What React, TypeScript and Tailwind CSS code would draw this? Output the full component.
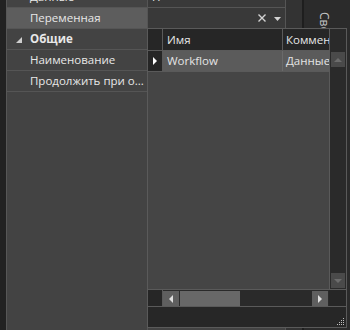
import React from "react";

const font = { fontFamily: '"Open Sans", "Noto Sans", sans-serif' };

function Tri({ dir, color }: { dir: "l" | "r" | "u" | "d"; color: string }) {
  const pts =
    dir === "l"
      ? "4,0 4,8 0,4"
      : dir === "r"
      ? "0,0 0,8 4,4"
      : dir === "u"
      ? "0,4 8,4 4,0"
      : "0,0 8,0 4,4";
  const w = dir === "l" || dir === "r" ? 4 : 8;
  const h = dir === "l" || dir === "r" ? 8 : 4;
  return (
    <svg width={w} height={h} viewBox={`0 0 ${w} ${h}`}>
      <polygon points={pts} fill={color} />
    </svg>
  );
}

function PropRow({
  label,
  highlight,
  value,
}: {
  label: string;
  highlight?: boolean;
  value?: React.ReactNode;
}) {
  return (
    <div className="flex h-[21px] border-b border-[#555555] shrink-0">
      <div
        className={`w-[140px] shrink-0 pl-[23px] flex items-center text-[#e8e8e8] whitespace-nowrap overflow-hidden ${
          highlight ? "bg-[#5d5d5d]" : ""
        }`}
      >
        {label}
      </div>
      <div className="w-px bg-[#555555] shrink-0" />
      <div className="flex-1 bg-[#393939] flex items-center">{value}</div>
    </div>
  );
}

export default function App() {
  return (
    <div
      className="w-[350px] h-[330px] relative overflow-hidden flex bg-[#434343] text-[11.5px] leading-none"
      style={font}
    >
      <div className="w-[6px] bg-[#222222] shrink-0" />
      <div className="w-px bg-[#575757] shrink-0" />

      {/* property grid */}
      <div className="w-[278px] shrink-0 flex flex-col">
        <div className="mt-[-13px]" />
        <PropRow
          label="Данные"
          value={<span className="pl-[4px] text-[#e8e8e8]">Н</span>}
        />
        <PropRow
          label="Переменная"
          highlight
          value={
            <div className="flex-1 flex items-center justify-end pr-[4px]">
              <svg width="8" height="8" viewBox="0 0 8 8">
                <path d="M0.5 0.5 L7.5 7.5 M7.5 0.5 L0.5 7.5" stroke="#d4d4d4" strokeWidth="1.4" />
              </svg>
              <span className="mt-[2px] ml-[8px]">
                <svg width="7" height="4" viewBox="0 0 7 4">
                  <polygon points="0,0 7,0 3.5,4" fill="#d4d4d4" />
                </svg>
              </span>
            </div>
          }
        />
        <div className="flex h-[21px] border-b border-[#555555] shrink-0 items-center">
          <div className="w-[23px] shrink-0 pl-[9px] flex items-center">
            <svg width="6" height="6" viewBox="0 0 6 6" className="mt-[1px]">
              <polygon points="6,0 6,6 0,6" fill="#cfcfcf" />
            </svg>
          </div>
          <span className="font-bold text-[#e8e8e8]">Общие</span>
        </div>
        <PropRow label="Наименование" />
        <PropRow label="Продолжить при о..." />
        <div className="flex-1 flex">
          <div className="w-[140px]" />
          <div className="w-px bg-[#555555]" />
          <div className="flex-1" />
        </div>
      </div>

      <div className="w-[17px] shrink-0 border-l border-[#555555] bg-[#333333]" />
      <div className="w-[2px] shrink-0 bg-[#1e1e1e]" />
      <div className="flex-1 bg-[#2b2b2b] pt-[12px] pl-[12px]">
        <div
          className="text-[12px] text-[#c4c4c4] leading-[16px]"
          style={{ writingMode: "vertical-rl" }}
        >
          Свойства
        </div>
      </div>

      {/* dropdown popup */}
      <div className="absolute left-[147px] top-[28px] w-[200px] h-[300px] border border-[#5a5a5a] bg-[#262626] flex flex-col">
        <div className="h-[260px] flex shrink-0">
          <div className="w-[181px] shrink-0 bg-[#454545] flex flex-col">
            <div className="h-[22px] flex border-b border-[#5a5a5a] bg-[#262626] shrink-0">
              <div className="w-[15px] border-r border-[#5a5a5a] shrink-0" />
              <div className="w-[120px] border-r border-[#5a5a5a] shrink-0 pl-[4px] flex items-center text-[#e8e8e8]">
                Имя
              </div>
              <div className="flex-1 pl-[3px] flex items-center text-[#e8e8e8] whitespace-nowrap overflow-hidden">
                Комментарий
              </div>
            </div>
            <div className="h-[21px] flex border-b border-[#5a5a5a] shrink-0">
              <div className="w-[15px] border-r border-[#5a5a5a] bg-[#262626] shrink-0 flex items-center justify-center">
                <Tri dir="r" color="#ffffff" />
              </div>
              <div className="w-[120px] border-r border-[#6a6a6a] bg-[#5b5b5b] shrink-0 pl-[4px] flex items-center text-[#e4e4e4]">
                Workflow
              </div>
              <div className="flex-1 bg-[#5b5b5b] pl-[3px] flex items-center text-[#e4e4e4] whitespace-nowrap overflow-hidden">
                Данные
              </div>
            </div>
          </div>
          <div className="w-[17px] shrink-0 border-l border-[#5a5a5a] bg-[#2a2a2a] flex flex-col">
            <div className="h-[23px] shrink-0" />
            <div className="h-[15px] w-[14px] ml-px bg-[#4a4a4a] flex items-center justify-center">
              <Tri dir="u" color="#6c6c6c" />
            </div>
            <div className="flex-1" />
            <div className="h-[15px] w-[14px] ml-px mb-px bg-[#4a4a4a] flex items-center justify-center">
              <Tri dir="d" color="#6c6c6c" />
            </div>
          </div>
        </div>
        <div className="h-[17px] shrink-0 border-t border-[#5a5a5a] flex">
          <div className="w-[15px] shrink-0 border-r border-[#5a5a5a]" />
          <div className="w-[166px] shrink-0 bg-[#2a2a2a] flex pt-px">
            <div className="w-[16px] h-[15px] bg-[#5f5f5f] flex items-center justify-center">
              <Tri dir="l" color="#dedede" />
            </div>
            <div className="w-[60px] h-[15px] ml-px bg-[#686868]" />
            <div className="flex-1" />
            <div className="w-[16px] h-[15px] mr-px bg-[#5f5f5f] flex items-center justify-center">
              <Tri dir="r" color="#dedede" />
            </div>
          </div>
          <div className="flex-1" />
        </div>
        <div className="flex-1 border-t border-[#5a5a5a] bg-[#272727] flex items-end justify-end pr-[2px] pb-[2px]">
          <svg width="8" height="8" viewBox="0 0 8 8">
            <rect x="7" y="1" width="1" height="1" fill="#bdbdbd" />
            <rect x="5" y="3" width="1" height="1" fill="#bdbdbd" />
            <rect x="7" y="3" width="1" height="1" fill="#bdbdbd" />
            <rect x="3" y="5" width="1" height="1" fill="#bdbdbd" />
            <rect x="5" y="5" width="1" height="1" fill="#bdbdbd" />
            <rect x="7" y="5" width="1" height="1" fill="#bdbdbd" />
            <rect x="1" y="7" width="1" height="1" fill="#bdbdbd" />
            <rect x="3" y="7" width="1" height="1" fill="#bdbdbd" />
            <rect x="5" y="7" width="1" height="1" fill="#bdbdbd" />
            <rect x="7" y="7" width="1" height="1" fill="#bdbdbd" />
          </svg>
        </div>
      </div>
    </div>
  );
}
